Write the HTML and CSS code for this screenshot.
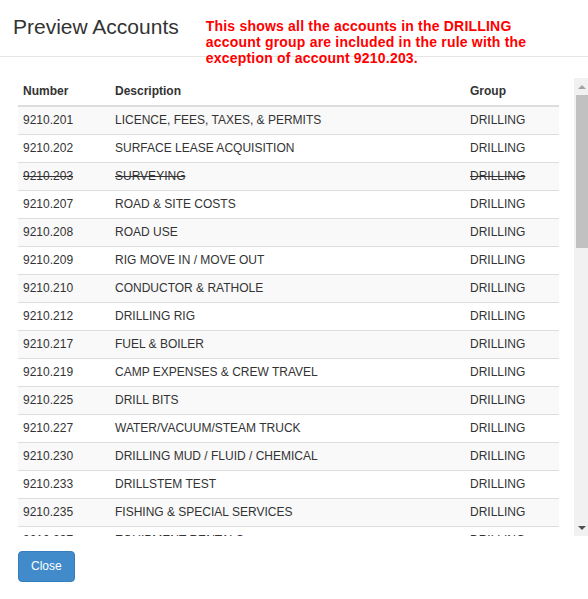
FILE: index.html
```html
<!DOCTYPE html>
<html>
<head>
<meta charset="utf-8">
<link rel="stylesheet" href="styles.css">
</head>
<body>
<div class="modal">
  <div class="modal-header">
    <h4 class="modal-title">Preview Accounts</h4>
    <div class="note">This shows all the accounts in the DRILLING<br>account group are included in the rule with the<br>exception of account 9210.203.</div>
  </div>
  <div class="modal-body">
    <div class="scroll-area">
      <div class="table-wrap">
        <table class="accounts">
          <colgroup><col class="c-num"><col class="c-desc"><col class="c-group"></colgroup>
          <thead>
            <tr><th>Number</th><th>Description</th><th>Group</th></tr>
          </thead>
          <tbody>
            <tr><td>9210.201</td><td>LICENCE, FEES, TAXES, &amp; PERMITS</td><td>DRILLING</td></tr>
            <tr><td>9210.202</td><td>SURFACE LEASE ACQUISITION</td><td>DRILLING</td></tr>
            <tr class="excluded"><td>9210.203</td><td>SURVEYING</td><td>DRILLING</td></tr>
            <tr><td>9210.207</td><td>ROAD &amp; SITE COSTS</td><td>DRILLING</td></tr>
            <tr><td>9210.208</td><td>ROAD USE</td><td>DRILLING</td></tr>
            <tr><td>9210.209</td><td>RIG MOVE IN / MOVE OUT</td><td>DRILLING</td></tr>
            <tr><td>9210.210</td><td>CONDUCTOR &amp; RATHOLE</td><td>DRILLING</td></tr>
            <tr><td>9210.212</td><td>DRILLING RIG</td><td>DRILLING</td></tr>
            <tr><td>9210.217</td><td>FUEL &amp; BOILER</td><td>DRILLING</td></tr>
            <tr><td>9210.219</td><td>CAMP EXPENSES &amp; CREW TRAVEL</td><td>DRILLING</td></tr>
            <tr><td>9210.225</td><td>DRILL BITS</td><td>DRILLING</td></tr>
            <tr><td>9210.227</td><td>WATER/VACUUM/STEAM TRUCK</td><td>DRILLING</td></tr>
            <tr><td>9210.230</td><td>DRILLING MUD / FLUID / CHEMICAL</td><td>DRILLING</td></tr>
            <tr><td>9210.233</td><td>DRILLSTEM TEST</td><td>DRILLING</td></tr>
            <tr><td>9210.235</td><td>FISHING &amp; SPECIAL SERVICES</td><td>DRILLING</td></tr>
            <tr><td>9210.237</td><td>EQUIPMENT RENTALS</td><td>DRILLING</td></tr>
            <tr><td>9210.240</td><td>SUPERVISION</td><td>DRILLING</td></tr>
            <tr><td>9210.243</td><td>WELLSITE GEOLOGIST</td><td>DRILLING</td></tr>
          </tbody>
        </table>
      </div>
      <div class="scrollbar">
        <div class="sb-btn"><span class="arrow-up"></span></div>
        <div class="sb-track"><div class="sb-thumb"></div></div>
        <div class="sb-btn sb-btn-down"><span class="arrow-down"></span></div>
      </div>
    </div>
  </div>
  <div class="modal-footer">
    <button class="btn-primary" type="button">Close</button>
  </div>
</div>
</body>
</html>
```
FILE: styles.css
```css
html, body {
  margin: 0;
  padding: 0;
  background: #fff;
}
body {
  font-family: "Liberation Sans", Arial, sans-serif;
  color: #333;
  font-size: 12px;
  width: 588px;
  height: 599px;
  overflow: hidden;
}
.modal-header {
  height: 56px;
  border-bottom: 1px solid #e5e5e5;
  display: flex;
  align-items: flex-start;
  padding-left: 13px;
}
.modal-title {
  margin: 0;
  padding-top: 15px;
  font-size: 21px;
  line-height: 24px;
  font-weight: normal;
  color: #333;
}
.note {
  margin-left: 27px;
  padding-top: 18px;
  font-size: 14px;
  line-height: 16px;
  font-weight: bold;
  letter-spacing: 0.2px;
  color: #ff0000;
  white-space: nowrap;
  position: relative;
  z-index: 1;
}
.modal-body {
  padding: 21px 0 0 18px;
}
.scroll-area {
  display: flex;
  height: 458px;
}
.table-wrap {
  width: 541px;
  overflow: hidden;
}
.accounts {
  width: 541px;
  border-collapse: collapse;
  table-layout: fixed;
}
.c-num { width: 92px; }
.c-desc { width: 355px; }
.c-group { width: 94px; }
.accounts th,
.accounts td {
  padding: 5px;
  line-height: 17px;
  text-align: left;
  white-space: nowrap;
}
.accounts th {
  font-weight: bold;
  border-bottom: 2px solid #ddd;
}
.accounts td {
  border-top: 1px solid #ddd;
}
.accounts tbody tr:first-child td {
  border-top: 0;
}
.accounts tbody tr:nth-child(odd) {
  background: #f9f9f9;
}
.excluded td {
  text-decoration: line-through;
}
.scrollbar {
  margin-left: 15px;
  width: 14px;
  background: #f1f1f1;
  display: flex;
  flex-direction: column;
}
.sb-btn {
  height: 17px;
  display: flex;
  align-items: center;
  justify-content: center;
  padding-left: 2px;
}
.sb-track {
  flex: 1;
  padding-left: 2px;
}
.sb-thumb {
  height: 153px;
  background: #c1c1c1;
}
.arrow-up {
  width: 0;
  height: 0;
  border-left: 4px solid transparent;
  border-right: 4px solid transparent;
  border-bottom: 4px solid #a3a3a3;
}
.arrow-down {
  width: 0;
  height: 0;
  border-left: 4px solid transparent;
  border-right: 4px solid transparent;
  border-top: 4px solid #505050;
}
.modal-footer {
  padding: 15px 0 0 18px;
}
.btn-primary {
  font-family: "Liberation Sans", Arial, sans-serif;
  font-size: 12px;
  line-height: 17px;
  padding: 6px 12px;
  color: #fff;
  background: #428bca;
  border: 1px solid #357ebd;
  border-radius: 4px;
  cursor: pointer;
}
```
